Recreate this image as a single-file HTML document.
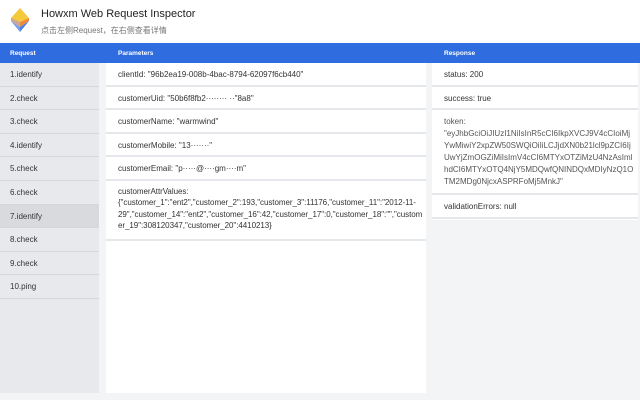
<!DOCTYPE html><html><head><meta charset="utf-8"><style>
*{margin:0;padding:0;box-sizing:border-box}
body{width:640px;height:400px;overflow:hidden;background:#f3f4f6;font-family:"Liberation Sans","Noto Sans CJK SC",sans-serif;color:#333;position:relative}
.hdr{position:absolute;left:0;top:0;width:640px;height:43px;background:#fff}
.t1{position:absolute;left:41px;top:8px;font-size:11px;color:#222}
.t2{position:absolute;left:41px;top:25px;font-size:8px;color:#777}
.bar{position:absolute;left:0;top:43px;width:640px;height:20px;background:#2f6ce0;color:#fff;font-size:6.5px;font-weight:bold}
.bar span{position:absolute;top:7px}
.side{position:absolute;left:0;top:63px;width:99px;height:330px;background:#e8e9ec}
.si{height:23.6px;border-bottom:1px solid #d6d7da;font-size:8px;color:#333;padding:7px 0 0 10px}
.si.sel{background:#d9dadd}
.col{position:absolute;top:63px;background:#fff}
.row{border-bottom:2px solid #e6e7ea;font-size:8px;color:#333;padding:7px 0 0 12px;height:23.6px}
</style></head><body>
<div class="hdr">
<svg style="position:absolute;left:9px;top:8px" width="22" height="24" viewBox="0 0 22 24">
<polygon points="11,0 20,10 11,14 2,10" fill="#f5c93a"/>
<polygon points="2,10 11,14 20,10 20,13 11,19 2,13" fill="#f08a3a"/>
<polygon points="2,13 11,19 20,13 11,24" fill="#4a7fe0"/>
<polygon points="2,10 11,14 11,24 2,13" fill="#a8c4f5" opacity=".5"/>
</svg>
<div class="t1">Howxm Web Request Inspector</div>
<div class="t2">点击左侧Request，在右侧查看详情</div>
</div>
<div class="bar"><span style="left:10px">Request</span><span style="left:118px">Parameters</span><span style="left:444px">Response</span></div>
<div class="side">
<div class="si">1.identify</div><div class="si">2.check</div><div class="si">3.check</div><div class="si">4.identify</div><div class="si">5.check</div><div class="si">6.check</div><div class="si sel">7.identify</div><div class="si">8.check</div><div class="si">9.check</div><div class="si">10.ping</div>
</div>
<div class="col" style="left:106px;width:320px;height:330px">
<div class="row">clientId: "96b2ea19-008b-4bac-8794-62097f6cb440"</div>
<div class="row">customerUid: "50b6f8fb2········ ··"8a8"</div>
<div class="row">customerName: "warmwind"</div>
<div class="row">customerMobile: "13·······"</div>
<div class="row">customerEmail: "p·····@····gm····m"</div>
<div class="row" style="height:60px;line-height:11.5px;padding-top:5px;padding-right:2px;letter-spacing:-0.05px;overflow-wrap:anywhere">customerAttrValues:<br>{"customer_1":"ent2","customer_2":193,"customer_3":11176,"customer_11":"2012-11-29","customer_14":"ent2","customer_16":42,"customer_17":0,"customer_18":"","customer_19":308120347,"customer_20":4410213}</div>
</div>
<div class="col" style="left:432px;width:206px;height:157px">
<div class="row">status: 200</div>
<div class="row">success: true</div>
<div class="row" style="height:85px;line-height:12px;padding-top:6px;padding-right:4px;word-break:break-all;color:#555">token:<br>"eyJhbGciOiJIUzI1NiIsInR5cCI6IkpXVCJ9V4cCIoiMjYwMiwiY2xpZW50SWQiOiIiLCJjdXN0b21lcl9pZCI6IjUwYjZmOGZiMiIsImV4cCI6MTYxOTZiMzU4NzAsImlhdCI6MTYxOTQ4NjY5MDQwfQNINDQxMDIyNzQ1OTM2MDg0NjcxASPRFoMj5MnkJ"</div>
<div class="row">validationErrors: null</div>
</div>
</body></html>
